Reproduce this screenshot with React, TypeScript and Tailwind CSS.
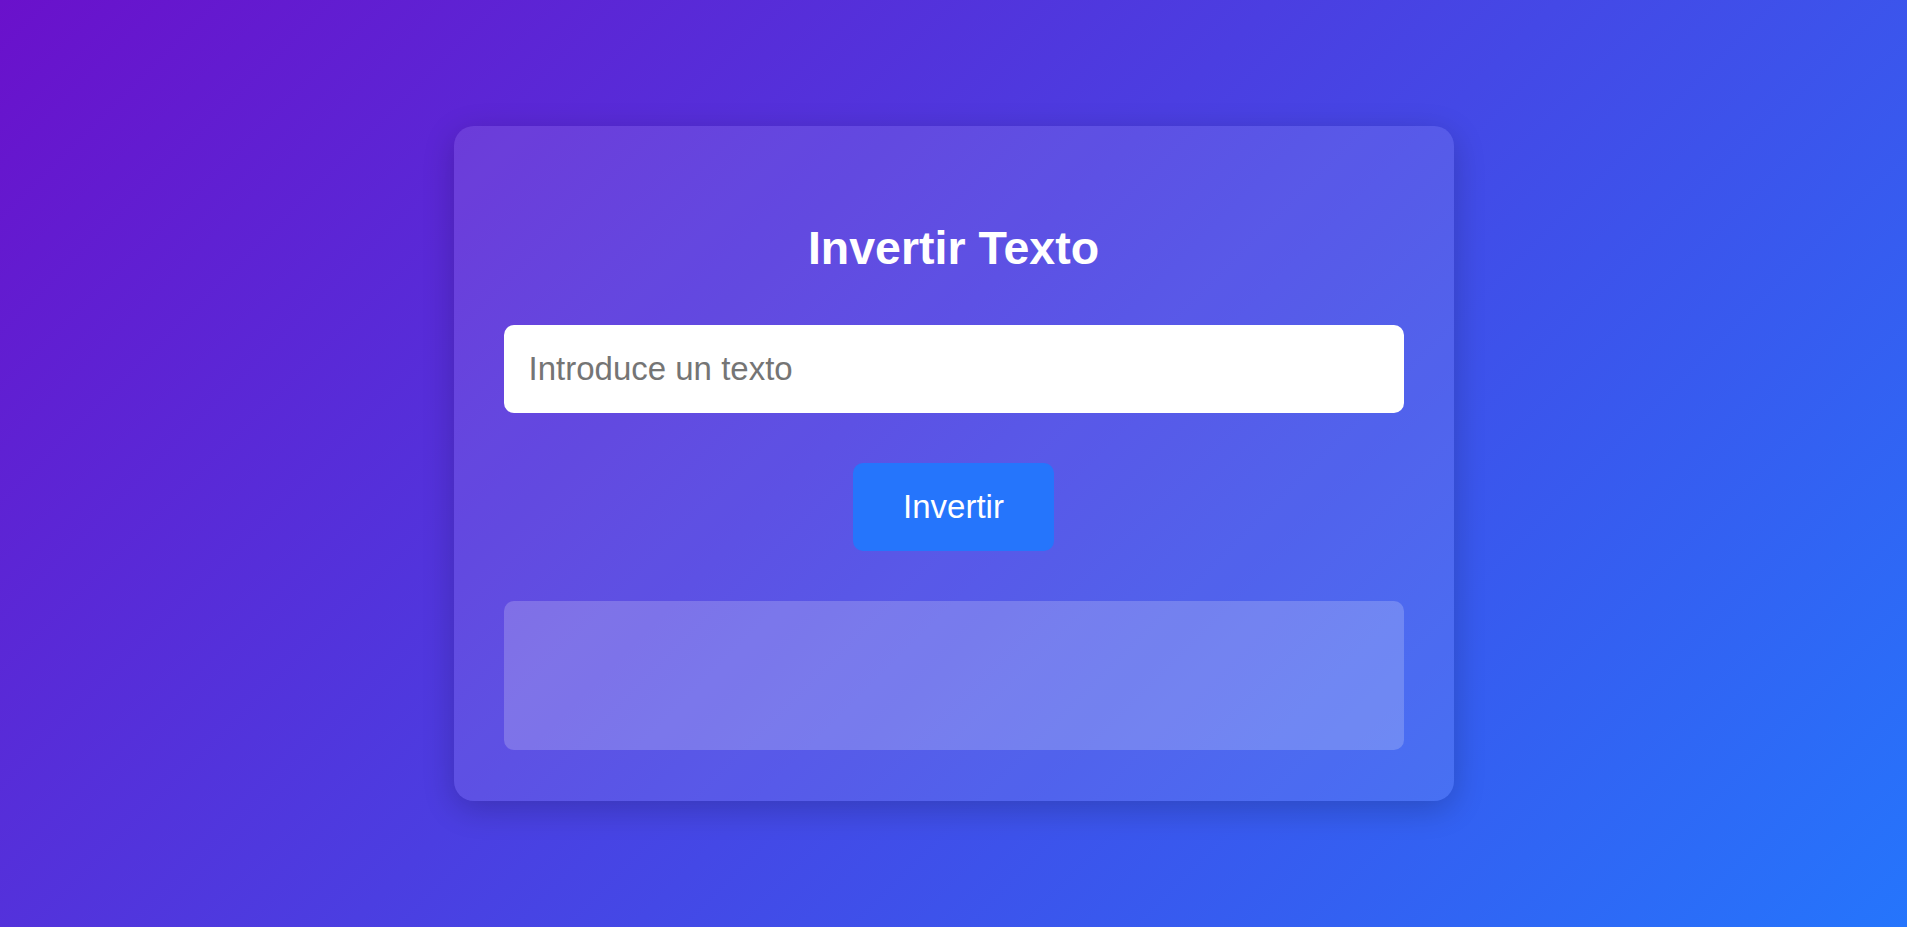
export default function App() {
  return (
    <div
      className="min-h-screen w-full flex items-center justify-center bg-[linear-gradient(135deg,#6a11cb,#2575fc)]"
      style={{ fontFamily: '"Liberation Sans", Arial, sans-serif' }}
    >
      <div className="w-[1000px] h-[675px] rounded-[20px] bg-white/10 shadow-[0_8px_32px_rgba(0,0,0,0.2)] p-[50px] flex flex-col items-center">
        <h2 className="mt-[46px] mb-[50px] text-[46.5px] leading-[53px] font-bold text-white">
          Invertir Texto
        </h2>
        <input
          type="text"
          placeholder="Introduce un texto"
          className="w-full h-[88px] rounded-[10px] bg-white px-[25px] text-[33px] text-gray-800 placeholder:text-[#757575] outline-none"
        />
        <button className="mt-[50px] w-[201px] h-[88px] rounded-[10px] bg-[#2575fc] text-white text-[33px]">
          Invertir
        </button>
        <div className="mt-[50px] w-full h-[149px] rounded-[10px] bg-white/20" />
      </div>
    </div>
  )
}
